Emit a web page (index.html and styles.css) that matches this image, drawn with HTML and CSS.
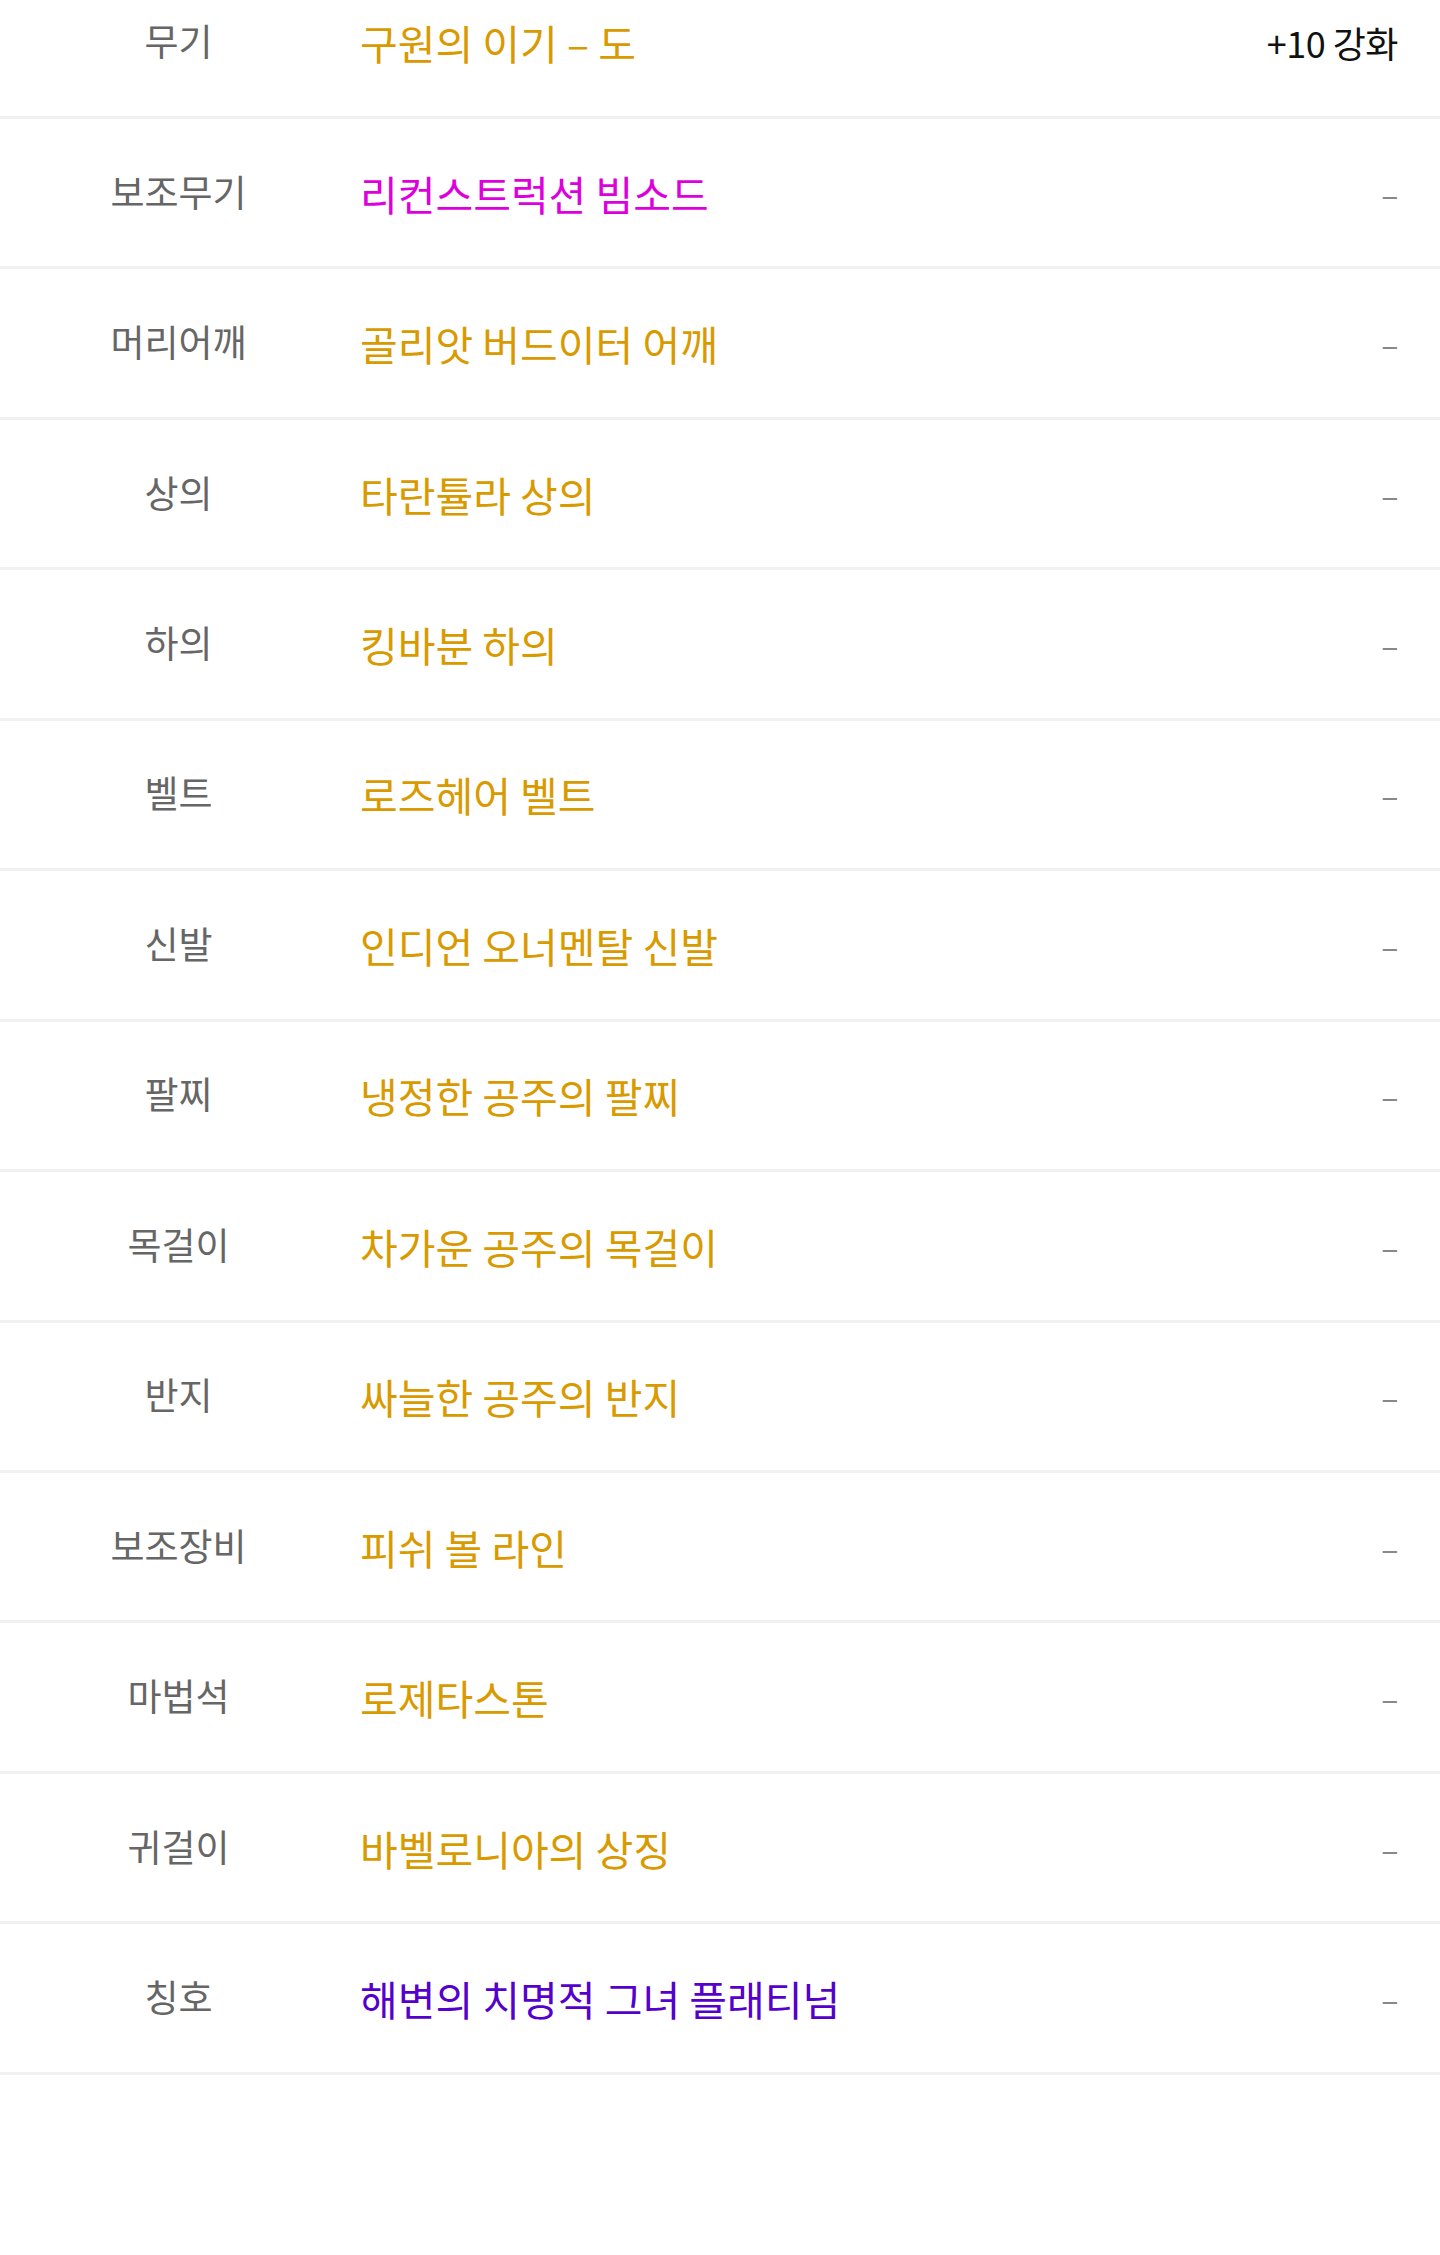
FILE: index.html
```html
<!DOCTYPE html>
<html>
<head>
	<meta charset="utf-8">
	<title>장비</title>
	<link rel="stylesheet" href="styles.css">
</head>
<body>
	<div class="equip-list">
		<div class="equip-row">
			<span class="slot">무기</span>
			<span class="item unique">구원의 이기 – 도</span>
			<span class="enhance">+10 강화</span>
		</div>
		<div class="equip-row">
			<span class="slot">보조무기</span>
			<span class="item epic">리컨스트럭션 빔소드</span>
			<span class="enhance empty">–</span>
		</div>
		<div class="equip-row">
			<span class="slot">머리어깨</span>
			<span class="item unique">골리앗 버드이터 어깨</span>
			<span class="enhance empty">–</span>
		</div>
		<div class="equip-row">
			<span class="slot">상의</span>
			<span class="item unique">타란튤라 상의</span>
			<span class="enhance empty">–</span>
		</div>
		<div class="equip-row">
			<span class="slot">하의</span>
			<span class="item unique">킹바분 하의</span>
			<span class="enhance empty">–</span>
		</div>
		<div class="equip-row">
			<span class="slot">벨트</span>
			<span class="item unique">로즈헤어 벨트</span>
			<span class="enhance empty">–</span>
		</div>
		<div class="equip-row">
			<span class="slot">신발</span>
			<span class="item unique">인디언 오너멘탈 신발</span>
			<span class="enhance empty">–</span>
		</div>
		<div class="equip-row">
			<span class="slot">팔찌</span>
			<span class="item unique">냉정한 공주의 팔찌</span>
			<span class="enhance empty">–</span>
		</div>
		<div class="equip-row">
			<span class="slot">목걸이</span>
			<span class="item unique">차가운 공주의 목걸이</span>
			<span class="enhance empty">–</span>
		</div>
		<div class="equip-row">
			<span class="slot">반지</span>
			<span class="item unique">싸늘한 공주의 반지</span>
			<span class="enhance empty">–</span>
		</div>
		<div class="equip-row">
			<span class="slot">보조장비</span>
			<span class="item unique">피쉬 볼 라인</span>
			<span class="enhance empty">–</span>
		</div>
		<div class="equip-row">
			<span class="slot">마법석</span>
			<span class="item unique">로제타스톤</span>
			<span class="enhance empty">–</span>
		</div>
		<div class="equip-row">
			<span class="slot">귀걸이</span>
			<span class="item unique">바벨로니아의 상징</span>
			<span class="enhance empty">–</span>
		</div>
		<div class="equip-row">
			<span class="slot">칭호</span>
			<span class="item rare">해변의 치명적 그녀 플래티넘</span>
			<span class="enhance empty">–</span>
		</div>
	</div>
</body>
</html>
```

FILE: styles.css
```css
body {
	margin: 0;
	background-color: #fff;
	font-family: "Noto Sans CJK KR", "Noto Sans", sans-serif;
	font-size: 36px;
}
.equip-list {
	margin-top: -31.5px;
}
.equip-row {
	display: flex;
	align-items: center;
	height: 150.46px;
	box-sizing: border-box;
	border-bottom: 3px solid #f1f1f1;
}
.slot {
	width: 357px;
	flex-shrink: 0;
	text-align: center;
	color: #666;
	font-size: 37px;
	margin-top: -4px;
}
.item {
	flex: 1;
	padding-left: 3px;
	font-size: 41px;
}
.item.unique {
	color: #d99a00;
}
.item.epic {
	color: #dd00dd;
}
.item.rare {
	color: #5500cc;
}
.enhance {
	padding-right: 42px;
	color: #111;
	letter-spacing: -0.5px;
}
.enhance.empty {
	color: #888;
	font-size: 32px;
}
```
